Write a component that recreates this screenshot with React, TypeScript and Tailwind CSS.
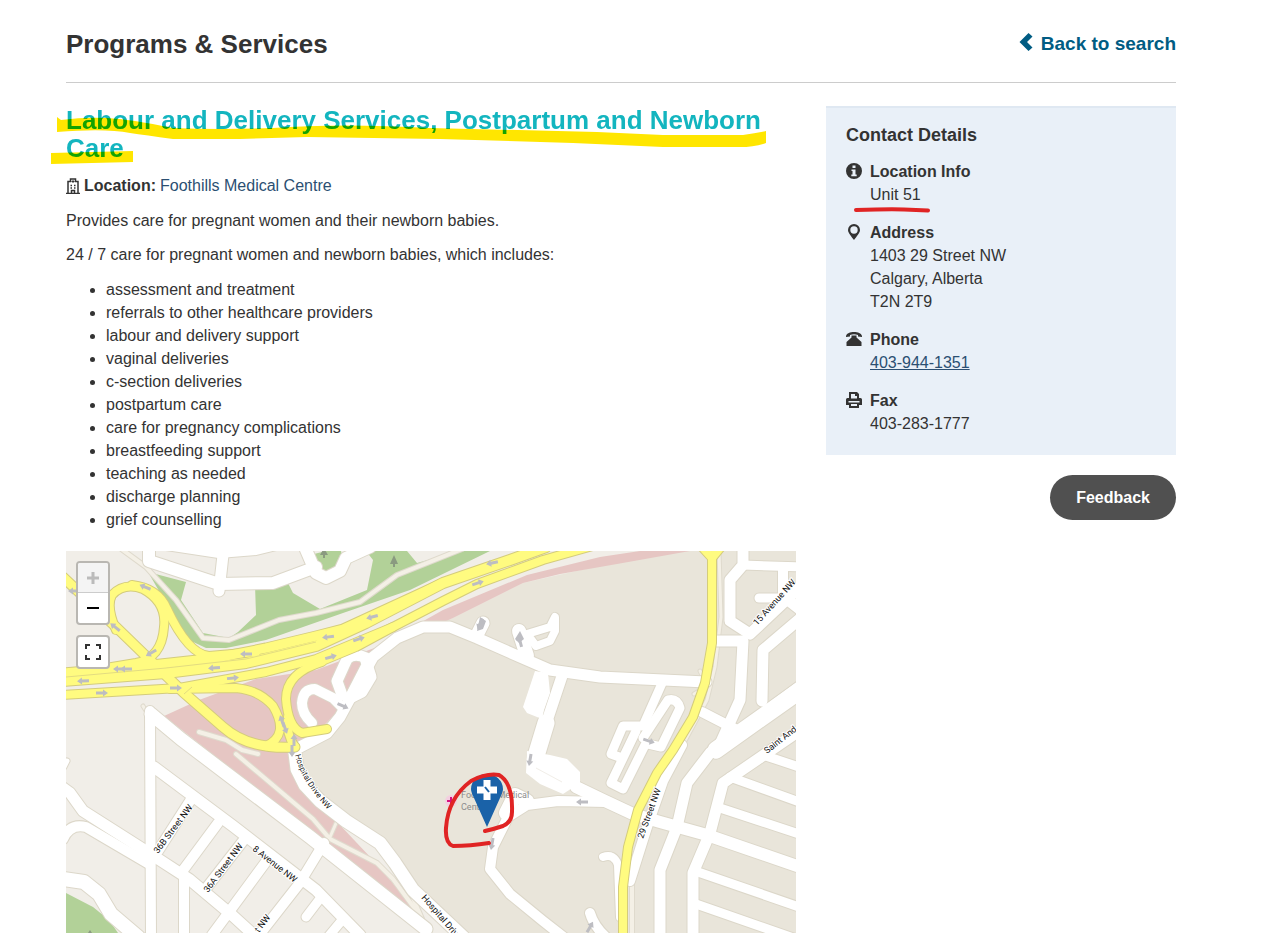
import type { ReactNode } from "react";

interface Road {
  d: string;
  w: number;
}

const services = [
  "assessment and treatment",
  "referrals to other healthcare providers",
  "labour and delivery support",
  "vaginal deliveries",
  "c-section deliveries",
  "postpartum care",
  "care for pregnancy complications",
  "breastfeeding support",
  "teaching as needed",
  "discharge planning",
  "grief counselling",
];

// White local streets, w is the width of the road surface
const streets: Road[] = [
  { d: "M84 160L85 386", w: 10 },
  { d: "M85 163L115 188L244 286L360 378", w: 13 },
  { d: "M88 216L167 275L250 339L294 384", w: 11 },
  { d: "M-4 236L4 242L17 260L83 302L123 328L167 365L190 386", w: 11 },
  { d: "M-3 288Q4 272 20 276L83 313", w: 10 },
  { d: "M124 250L92 300", w: 10 },
  { d: "M152 272L115 322", w: 10 },
  { d: "M177 290L138 340", w: 10 },
  { d: "M202 308L160 365L146 384", w: 10 },
  { d: "M258 292L233 333L190 388", w: 10 },
  { d: "M118 328V386", w: 10 },
  { d: "M256 345L240 366", w: 9 },
  { d: "M277 368L262 386", w: 9 },
  { d: "M-3 328L18 331L33 343L45 363L72 386", w: 14 },
  { d: "M-2 216L1 210", w: 5 },
  { d: "M83 -5V10L153 33L207 32L250 16", w: 12 },
  { d: "M157 4L153 40", w: 11 },
  { d: "M100 -6L153 2L190 -1L210 -6", w: 10 },
  { d: "M238 -6L250 22L260 27L274 20L280 7L304 -4", w: 12 },
  { d: "M234 196L261 182L274 166L287 142L307 106L331 87L357 76L384 76L411 87L461 109L484 119L534 126L640 131", w: 11 },
  { d: "M300 107Q288 101 281 108L271 130L276 144", w: 11 },
  { d: "M300 110L305 126L296 141L284 147L301 114", w: 11 },
  { d: "M277 157L267 147L249 138Q237 138 236 152Q236 163 246 172", w: 10 },
  { d: "M229 202L231 218L239 234L254 250L280 270L314 292L329 312L347 339L397 386", w: 13 },
  { d: "M417 72L411 84", w: 13 },
  { d: "M453 80L461 105", w: 14 },
  { d: "M461 83L484 76L489 66V80L484 90L470 95Z", w: 8 },
  { d: "M497 122L481 170", w: 11 },
  { d: "M480 172L470 205", w: 17 },
  { d: "M510 236L537 249L567 263L594 271L641 284L734 316", w: 12 },
  { d: "M540 251L492 250L461 254L442 266L427 296L424 318L444 343L477 370L500 388", w: 10 },
  { d: "M461 250L449 244L440 262", w: 14 },
  { d: "M597 130L577 175L557 175L545 203L556 207", w: 9 },
  { d: "M570 180L545 232L557 238L580 192", w: 9 },
  { d: "M577 187L602 149Q611 147 614 157L595 196L582 193", w: 9 },
  { d: "M677 -4V14L664 29V70L684 83L734 36", w: 11 },
  { d: "M677 14L734 16", w: 9 },
  { d: "M717 16V50", w: 10 },
  { d: "M693 47H722", w: 9 },
  { d: "M718 46L736 60", w: 11 },
  { d: "M651 90H677L674 149L650 202", w: 11 },
  { d: "M736 66L697 99L696 150", w: 11 },
  { d: "M736 134L644 202L621 232L611 276L594 319V386", w: 11 },
  { d: "M736 138L650 199", w: 17 },
  { d: "M636 161L671 179", w: 10 },
  { d: "M736 178L657 232L644 282L627 322V386", w: 11 },
  { d: "M697 204L736 217", w: 9 },
  { d: "M664 226L736 252", w: 9 },
  { d: "M654 257L736 284", w: 9 },
  { d: "M632 321L736 357", w: 9 },
  { d: "M630 353L736 390", w: 9 },
  { d: "M537 306Q548 302 552 314L554 366", w: 8 },
  { d: "M524 362Q528 376 542 388", w: 10 },
  { d: "M616 194L597 230L581 276L564 330", w: 10 },
];

const paths: Road[] = [
  { d: "M54 -3L80 16L110 49L137 87L163 89L213 69L250 62L294 51L331 24L396 -2", w: 4 },
  { d: "M133 181L160 189L176 199L192 203", w: 4 },
  { d: "M170 203L247 268L264 288L311 312L327 328L352 362", w: 4 },
  { d: "M264 286L271 270", w: 3 },
  { d: "M344 340L356 368", w: 4 },
  { d: "M653 0L655 66L649 116L641 149L614 199", w: 3 },
  { d: "M566 330V386", w: 4 },
  { d: "M77 155L82 163", w: 3 },
  { d: "M634 120L638 128M628 143L640 136", w: 3 },
];

const highways: Road[] = [
  { d: "M-3 130L100 122L180 112L250 95L300 72L377 32L444 9L480 -4", w: 10 },
  { d: "M-3 122L67 116L150 107L200 97L250 85L277 78L377 32", w: 9 },
  { d: "M-3 144L113 137L200 121L250 108L327 76L377 50L411 33L477 9L530 -6", w: 8 },
  { d: "M244 115L290 96L327 76", w: 8 },
  { d: "M66 34Q92 37 101 58Q122 103 143 105L190 101", w: 8 },
  { d: "M50 79Q40 55 46 44Q58 31 77 38Q101 51 98 76Q96 107 70 112L-3 124", w: 8 },
  { d: "M104 138L170 137Q193 139 207 155Q224 184 200 195", w: 8 },
  { d: "M256 111Q220 122 220 148Q222 176 236 182L261 178", w: 8 },
  { d: "M222 166Q220 184 229 196", w: 8 },
  { d: "M-3 26L50 76L117 141L157 176Q183 199 229 196", w: 9 },
  { d: "M636 -4L646 7L655 -4", w: 8 },
  { d: "M646 4L646 92L639 132L627 166L607 199L591 222L572 259L562 296L557 336V386", w: 8 },
];

// x, y, rotation
const arrows: [number, number, number][] = [
  [8, 40, 180], [79, 36, 202], [49, 76, 218], [85, 102, 150], [53, 118, 180], [60, 118, 180],
  [17, 130, 178], [36, 142, 0], [110, 137, 0], [180, 103, 180], [148, 117, 175], [167, 127, -6],
  [262, 86, 172], [306, 66, 165], [265, 106, -16], [293, 88, -18], [426, 12, 168], [412, 32, -18],
  [216, 170, 250], [219, 177, 70], [228, 189, -90], [226, 200, 90], [277, 155, 24], [414, 73, 115],
  [454, 90, -105], [583, 190, 18], [464, 209, 100], [516, 251, 180], [426, 293, 100], [524, 376, -60],
];

const labels: { text: string; x: number; y: number; angle: number }[] = [
  { text: "15 Avenue NW", x: 691, y: 75, angle: -48 },
  { text: "Saint And", x: 701, y: 203, angle: -38 },
  { text: "29 Street NW", x: 577, y: 288, angle: -70 },
  { text: "36B Street NW", x: 92, y: 303, angle: -53 },
  { text: "36A Street NW", x: 142, y: 342, angle: -53 },
  { text: "8 Avenue NW", x: 186, y: 299, angle: 38 },
  { text: "t NW", x: 193, y: 382, angle: -53 },
  { text: "Hospital Driv", x: 355, y: 347, angle: 49 },
];

function Roads({ roads, casing, fill }: { roads: Road[]; casing: string; fill: string }) {
  return (
    <g fill="none" strokeLinejoin="round" strokeLinecap="round">
      {roads.map((r) => (
        <path key={r.d} d={r.d} stroke={casing} strokeWidth={r.w + 2} />
      ))}
      {roads.map((r) => (
        <path key={r.d} d={r.d} stroke={fill} strokeWidth={r.w} />
      ))}
    </g>
  );
}

function StreetMap() {
  return (
    <svg
      viewBox="0 0 730 382"
      preserveAspectRatio="xMinYMin slice"
      className="absolute inset-0 w-full h-full"
      role="img"
      aria-label="Map of Foothills Medical Centre"
    >
      <rect width="730" height="382" fill="#f1eee8" />
      {/* Hospital grounds and the neighbourhood to the east */}
      <path d="M730 0H600L457 32L387 67L320 90L277 155L229 204L240 236L314 294L395 382H730Z" fill="#e9e5da" />
      <path
        d="M82 21L120 31L115 49L137 82L163 87L172 81L190 64L189 34L222 32L227 42L254 58L301 39L307 9L300 0H341L351 12L394 0H424L344 39L277 62L200 89L160 97L140 97L123 89L100 52Z"
        fill="#b2d198"
      />
      <path d="M244 4L260 0H275L278 14L268 22L252 22Z" fill="#b2d198" />
      <path d="M0 342L27 356L43 369L52 382H0Z" fill="#b2d198" />
      <path
        d="M624 0L551 13L494 23L457 32L387 67L357 80L307 106L277 155L229 204L238 236L307 309L354 364L244 280L98 165L133 149L190 128L250 119L311 96L377 59L461 24L534 6L574 0Z"
        fill="#e6c6c3"
      />

      <Roads roads={paths} casing="#dfdacd" fill="#f4f0e6" />
      <Roads roads={streets} casing="#dcd7c9" fill="#ffffff" />
      {/* Parking areas */}
      <g fill="#ffffff">
        <path d="M469 120L457 156L461 162L476 168L478 159L484 142L482 122Z" />
        <path d="M461 200L484 204L501 208L514 221V232L497 243L474 233L460 222Z" />
      </g>
      <path d="M470 217L496 231" stroke="#f1eee8" />
      <Roads roads={highways} casing="#d4cc7c" fill="#fffb80" />

      <g fill="none" stroke="#e3dc80" strokeWidth="1">
        <path d="M0 126L100 117L180 108L250 91" />
        <path d="M118 143L126 136" />
      </g>

      <g fill="#8a9a80">
        <path d="M328 4l-4 9h3v3h2v-3h3z" />
        <path d="M258 -3l-4 7h3v3h2v-3h3z" />
        <path d="M24 379l-4 6h8z" />
      </g>

      <g fill="#bdbdc2">
        {arrows.map(([x, y, angle]) => (
          <path
            key={`${x}-${y}`}
            d="M-6 -1.500H1V-3.500L6 0L1 3.500V1.500H-6Z"
            transform={`translate(${x} ${y}) rotate(${angle})`}
          />
        ))}
      </g>
      <path d="M414 66L420 70L417 78L411 80Z" fill="#bdbdc2" />
      <path d="M454 80L458 88L453 92L449 88Z" fill="#bdbdc2" />

      <g fontFamily="Roboto, sans-serif" fontSize="9" fill="#111111" stroke="#ffffff" strokeWidth="2" paintOrder="stroke">
        {labels.map((l) => (
          <text key={`${l.text}-${l.x}`} transform={`translate(${l.x} ${l.y}) rotate(${l.angle})`}>
            {l.text}
          </text>
        ))}
        <path id="hospital-drive" d="M229 204Q235 231 266 263" fill="none" stroke="none" />
        <text fontSize="8">
          <textPath href="#hospital-drive">Hospital Drive NW</textPath>
        </text>
      </g>

      {/* Hospital label and pin */}
      <circle cx="385" cy="250" r="6" fill="#f3cfe0" />
      <path d="M385 246v8M381 250h8" stroke="#d6127e" strokeWidth="2" />
      <g fontFamily="Roboto, sans-serif" fontSize="9" fill="#8c8c8c">
        <text x="395" y="247">Foothills Medical</text>
        <text x="395" y="259">Centre</text>
      </g>
      <path d="M421 276L408 247Q405 241 405 238A16 15 0 0 1 437 238Q437 241 434 247Z" fill="#1a62a8" />
      <path d="M421 229V249M411 239H431" stroke="#ffffff" strokeWidth="7" />
      <path d="M419 236L423 241" stroke="#1a62a8" strokeWidth="2" />
      <path
        d="M423 292Q404 295 387 295Q379 292 380 277Q382 247 405 230Q420 222 433 224Q447 232 446 261Q446 271 437 275Q428 278 419 280"
        fill="none"
        stroke="#e02424"
        strokeWidth="4"
        strokeLinecap="round"
        strokeLinejoin="round"
      />
    </svg>
  );
}

function Icon({ children }: { children: ReactNode }) {
  return (
    <svg viewBox="0 0 16 16" className="w-4 h-4 shrink-0 mt-[3px]" fill="#333333" aria-hidden="true">
      {children}
    </svg>
  );
}

function ContactItem({ icon, title, children }: { icon: ReactNode; title: string; children: ReactNode }) {
  return (
    <div className="flex gap-2">
      <Icon>{icon}</Icon>
      <div>
        <h4 className="font-bold">{title}</h4>
        {children}
      </div>
    </div>
  );
}

export default function App() {
  return (
    <div className="min-h-screen flex flex-col bg-white pl-[66px] pr-[93px] font-['Liberation_Sans',Arial,sans-serif] text-base leading-[23px] text-[#333333]">
      <header className="flex items-center justify-between h-[83px] pt-[5px] border-b border-[#cccccc]">
        <h1 className="text-[26px] leading-7 font-bold">Programs &amp; Services</h1>
        <a href="#search" className="flex items-center gap-2 text-[19px] font-bold text-[#005c83]">
          <svg viewBox="0 0 14 18" className="w-[14px] h-[18px] -mt-1" fill="currentColor" aria-hidden="true">
            <path d="M9.500 0L13.500 3.500L8 9L13.500 14.500L9.500 18L0.500 9Z" />
          </svg>
          Back to search
        </a>
      </header>

      <div className="flex grow gap-[30px] pt-[23px]">
        <main className="flex flex-col grow min-w-0">
          <div className="relative isolate mb-3">
            <h2 className="text-[26px] leading-7 font-bold text-[#13b5bf]">
              Labour and Delivery Services, Postpartum and Newborn Care
            </h2>
            {/* Highlighter strokes */}
            <svg
              viewBox="0 0 720 60"
              className="absolute -left-4 top-0 w-[720px] h-[60px] mix-blend-multiply pointer-events-none"
              fill="#ffe600"
              aria-hidden="true"
            >
              <path d="M7 11L11 14Q34 11 57 12Q80 13 123 22Q170 24 223 22Q290 17 380 22L547 26L613 29H693Q706 27 716 25V37Q704 41 690 41L613 41L523 37L390 33L257 31L190 33L123 33Q95 29 80 27Q55 22 7 26Z" />
              <path d="M1 47L83 45V56L1 58Z" />
            </svg>
          </div>

          <p className="flex items-center mb-3">
            <svg viewBox="0 0 14 16" className="w-[14px] h-4 mr-1" fill="none" stroke="#333333" aria-hidden="true">
              <path d="M2 15V3.500H4.500V1H9.500V3.500H12V15M0 15.500H14M5.500 15V12.500H8.500V15" strokeWidth="1.500" />
              <path d="M7 2V5M5.500 3.500H8.500" />
              <path d="M4.500 7.500H6M8 7.500H9.500M4.500 10H6M8 10H9.500" strokeWidth="1.500" />
            </svg>
            <strong className="mr-1">Location:</strong>
            <a href="#foothills" className="text-[#2b4f72]">
              Foothills Medical Centre
            </a>
          </p>
          <p className="mb-[11px]">Provides care for pregnant women and their newborn babies.</p>
          <p className="mb-3">24 / 7 care for pregnant women and newborn babies, which includes:</p>
          <ul className="list-disc pl-10 mb-5">
            {services.map((service) => (
              <li key={service}>{service}</li>
            ))}
          </ul>

          <div className="relative grow min-h-[380px] overflow-hidden">
            <StreetMap />
            <div className="absolute left-[10px] top-[10px] flex flex-col gap-[10px]">
              <div className="flex flex-col rounded border-2 border-[#b9b7b2] bg-white overflow-hidden">
                <button
                  aria-label="Zoom in"
                  className="flex items-center justify-center w-[30px] h-[30px] border-b border-[#cccccc] bg-[#f4f4f4] text-[#bbbbbb]"
                >
                  <svg viewBox="0 0 14 14" className="w-[14px] h-[14px]" stroke="currentColor" strokeWidth="3">
                    <path d="M7 1V13M1 7H13" />
                  </svg>
                </button>
                <button aria-label="Zoom out" className="flex items-center justify-center w-[30px] h-[30px] text-black">
                  <svg viewBox="0 0 14 14" className="w-[14px] h-[14px]" stroke="currentColor" strokeWidth="2">
                    <path d="M1 7H13" />
                  </svg>
                </button>
              </div>
              <button
                aria-label="Full screen"
                className="flex items-center justify-center w-[34px] h-[34px] rounded border-2 border-[#b9b7b2] bg-white"
              >
                <svg viewBox="0 0 16 16" className="w-4 h-4" fill="none" stroke="#333333" strokeWidth="2">
                  <path d="M1 5V1H5M11 1H15V5M15 11V15H11M5 15H1V11" />
                </svg>
              </button>
            </div>
          </div>
        </main>

        <aside className="w-[350px] shrink-0 flex flex-col items-end gap-5">
          <section className="relative w-full border-t-2 border-[#dfe8f2] bg-[#e9f0f8] px-5 pt-4 pb-5">
            <h3 className="mb-[13px] text-lg leading-[23px] font-bold">Contact Details</h3>
            <div className="flex flex-col gap-[15px]">
              <ContactItem
                title="Location Info"
                icon={
                  <path
                    fillRule="evenodd"
                    d="M8 0a8 8 0 1 0 0 16a8 8 0 1 0 0-16ZM6.500 2.500h3v2.500h-3ZM5.500 6.500h4v5h1.200v1.700H5.300v-1.700h1.200V8H5.500Z"
                  />
                }
              >
                <p>Unit 51</p>
                <svg
                  viewBox="0 0 76 6"
                  className="absolute left-7 top-[99px] w-[76px] h-[6px]"
                  fill="none"
                  stroke="#e02424"
                  strokeWidth="4"
                  strokeLinecap="round"
                  aria-hidden="true"
                >
                  <path d="M2 3Q35 2 50 2.500L74 3.500" />
                </svg>
              </ContactItem>
              <ContactItem
                title="Address"
                icon={
                  <path
                    fillRule="evenodd"
                    d="M8 0a6 6 0 0 0-6 6c0 3 3.500 6.500 6 10c2.500-3.500 6-7 6-10a6 6 0 0 0-6-6ZM8 2.300a3.700 3.700 0 1 1 0 7.400a3.700 3.700 0 1 1 0-7.400Z"
                  />
                }
              >
                <address className="not-italic">
                  1403 29 Street NW
                  <br />
                  Calgary, Alberta
                  <br />
                  T2N 2T9
                </address>
              </ContactItem>
              <ContactItem
                title="Phone"
                icon={
                  <>
                    <path d="M0 5C1 2 4 1 8 1S15 2 16 5V6L12 5.500V4Q8 2.500 4 4V5.500L0 6Z" />
                    <path d="M5.500 4.500H10.500V6.500L15.500 11V15H0.500V11L5.500 6.500Z" />
                  </>
                }
              >
                <a href="tel:403-944-1351" className="text-[#2b4f72] underline">
                  403-944-1351
                </a>
              </ContactItem>
              <ContactItem
                title="Fax"
                icon={
                  <path
                    fillRule="evenodd"
                    d="M3 0H11L13 2V6H14.500Q16 6 16 7.500V13H13V16H3V13H0V7.500Q0 6 1.500 6H3ZM5 2V6.500H11V4H9V2ZM2.500 9V10.500H13.500V9ZM5 12V14H11V12Z"
                  />
                }
              >
                <p>403-283-1777</p>
              </ContactItem>
            </div>
          </section>
          <button className="h-[45px] px-[26px] rounded-full bg-[#505050] text-white font-bold">Feedback</button>
        </aside>
      </div>
    </div>
  );
}
